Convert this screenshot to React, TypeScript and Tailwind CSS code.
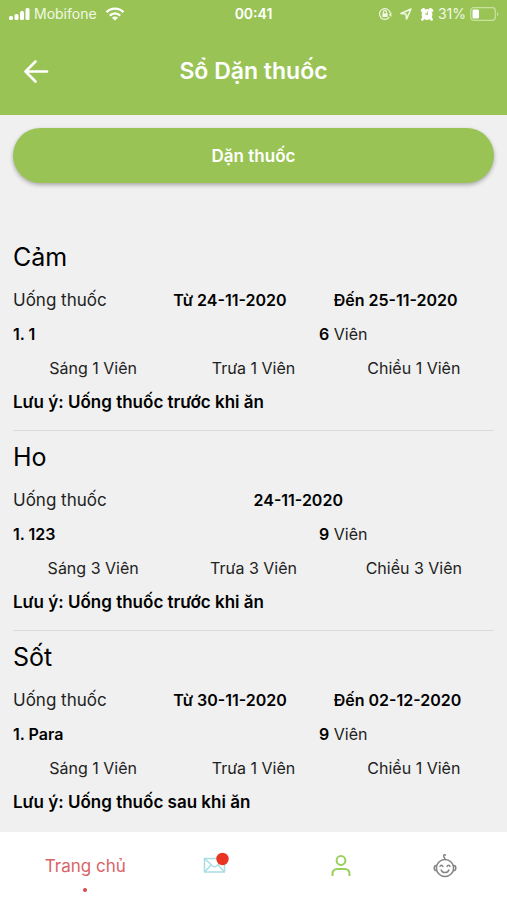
const donThuoc = [
  {
    ten: 'Cảm',
    ngay: ['Từ 24-11-2020', 'Đến 25-11-2020'],
    thuoc: '1. 1',
    tong: 6,
    lieu: ['Sáng 1 Viên', 'Trưa 1 Viên', 'Chiều 1 Viên'],
    luuY: 'Uống thuốc trước khi ăn',
  },
  {
    ten: 'Ho',
    ngay: ['24-11-2020'],
    thuoc: '1. 123',
    tong: 9,
    lieu: ['Sáng 3 Viên', 'Trưa 3 Viên', 'Chiều 3 Viên'],
    luuY: 'Uống thuốc trước khi ăn',
  },
  {
    ten: 'Sốt',
    ngay: ['Từ 30-11-2020', 'Đến 02-12-2020'],
    thuoc: '1. Para',
    tong: 9,
    lieu: ['Sáng 1 Viên', 'Trưa 1 Viên', 'Chiều 1 Viên'],
    luuY: 'Uống thuốc sau khi ăn',
  },
]

function StatusBar() {
  return (
    <div className="grid grid-cols-3 items-center h-7 px-2 text-sm text-[#f1f8e4]">
      <div className="flex items-center gap-1">
        <svg width="22" height="14" viewBox="0 0 22 14" fill="white" aria-hidden="true">
          <rect x="1" y="9" width="4" height="4" rx="1.5" />
          <rect x="6.5" y="7" width="4" height="6" rx="1.5" />
          <rect x="12" y="4" width="4" height="9" rx="1.5" />
          <rect x="17.5" y="1" width="4" height="12" rx="1.5" />
        </svg>
        <span>Mobifone</span>
        <svg className="ml-1" width="20" height="14" viewBox="0 0 20 14" fill="none" stroke="white" strokeWidth="2.4" aria-hidden="true">
          <path d="M1.5 5.2a12 12 0 0 1 17 0" />
          <path d="M4.800 8.600a7.300 7.300 0 0 1 10.400 0" />
          <path d="M10 13.600 7 10.800a4.200 4.200 0 0 1 6 0z" fill="white" stroke="none" />
        </svg>
      </div>
      <span className="text-center font-semibold text-white">00:41</span>
      <div className="flex items-center justify-end gap-1">
        <svg width="14" height="14" viewBox="0 0 14 14" fill="none" stroke="currentColor" strokeWidth="1.2" aria-hidden="true">
          <path d="M11.3 10.200a5.400 5.400 0 1 1 .9-4.200M12.800 5.400v3.200l-1.600-1.400" />
          <rect x="4.300" y="6.200" width="5.400" height="3.800" rx=".5" fill="currentColor" stroke="none" />
          <path d="M5.400 6.400V5.200a1.600 1.600 0 0 1 3.200 0v1.200" />
        </svg>
        <svg className="mx-1" width="12" height="12" viewBox="0 0 12 12" fill="none" stroke="currentColor" strokeWidth="1.5" strokeLinejoin="round" aria-hidden="true">
          <path d="M11 1 .9 5.500l5.100.6.500 5z" />
        </svg>
        <svg width="14" height="14" viewBox="0 0 14 14" aria-hidden="true">
          <circle cx="7" cy="7.500" r="5.400" fill="white" />
          <path d="M2 3.600 3.600 2.200M12 3.600 10.400 2.200M3.400 11.200l-1 1.200M10.600 11.200l1 1.200" stroke="white" strokeWidth="2.600" strokeLinecap="round" />
          <path d="M7.300 4.600v3.200L5.200 6.600" fill="none" stroke="#99c455" strokeWidth="1" />
        </svg>
        <span>31%</span>
        <svg width="29" height="14" viewBox="0 0 29 14" aria-hidden="true">
          <rect x=".7" y=".7" width="24.600" height="12.600" rx="3" fill="none" stroke="#c9e2a0" strokeWidth="1.200" />
          <rect x="2.500" y="2.500" width="6.500" height="9" rx="1.200" fill="white" />
          <path d="M27 4.800c1.800.8 1.800 3.600 0 4.400z" fill="#c9e2a0" />
        </svg>
      </div>
    </div>
  )
}

function DonThuoc({ don }: { don: any }) {
  const motNgay = don.ngay.length === 1
  return (
    <section className="border-b border-[#dcdcdc] pb-[11px] last:border-b-0">
      <h2 className="text-[25px] leading-[52px]">{don.ten}</h2>
      <div className={motNgay ? 'grid grid-cols-2' : 'grid grid-cols-3'}>
        <span className="text-[17px] text-[#222]">Uống thuốc</span>
        {don.ngay.map((n: string) => <span key={n} className="font-semibold whitespace-nowrap">{n}</span>)}
      </div>
      <div className="grid grid-cols-11">
        <span className="col-span-7 font-semibold">{don.thuoc}</span>
        <span className="col-span-4 text-[#222]"><b className="font-semibold text-black">{don.tong}</b> Viên</span>
      </div>
      <div className="grid grid-cols-3 text-center text-[#222]">
        {don.lieu.map((l: string) => <span key={l}>{l}</span>)}
      </div>
      <p className="text-[17px] font-semibold">Lưu ý: {don.luuY}</p>
    </section>
  )
}

function BottomNav() {
  return (
    <nav className="grid grid-cols-[170fr_88fr_164fr_43fr] h-[68px] pr-10 bg-white">
      <a href="#home" className="flex flex-col items-center pt-6 text-[17px] leading-5 text-[#d96468]">
        Trang chủ
        <span className="mt-3 size-1 rounded-full bg-[#d2494f]" />
      </a>
      <a href="#mail" aria-label="Tin nhắn" className="flex justify-center pt-5">
        <svg width="28" height="24" viewBox="0 0 28 24" fill="none" aria-hidden="true">
          <g stroke="#a9dde3" strokeWidth="1.5" strokeLinejoin="round">
            <rect x="3.500" y="6.500" width="20" height="13.500" />
            <path d="m3.500 6.500 8 7.500q2 1.600 4 0l8-7.500M3.500 20l6.700-7.200M23.500 20l-6.700-7.200" />
          </g>
          <circle cx="21.500" cy="7" r="6.200" fill="#e93323" />
        </svg>
      </a>
      <a href="#profile" aria-label="Tài khoản" className="flex justify-center pt-5">
        <svg width="22" height="26" viewBox="0 0 22 26" fill="none" stroke="#98d05b" strokeWidth="2" aria-hidden="true">
          <circle cx="11" cy="8.500" r="4.400" />
          <path d="M2.500 24v-2.500a4.500 4.500 0 0 1 4.500-4.500h8a4.500 4.500 0 0 1 4.500 4.500V24" />
        </svg>
      </a>
      <a href="#baby" aria-label="Bé" className="flex justify-center pt-5">
        <svg width="26" height="28" viewBox="0 0 26 28" fill="none" stroke="#858585" strokeWidth="1.500" strokeLinecap="round" aria-hidden="true">
          <circle cx="13" cy="16" r="8.600" />
          <path d="M13 7.200c-.2-1.700-1.600-2-1.400-3.400.2-1.100 1.400-1.300 1.800-.6" />
          <path d="M4.200 13.400C2.900 13.400 2.200 14.600 2.200 16s.7 2.600 2 2.600M21.800 13.400c1.300 0 2 1.200 2 2.600s-.7 2.600-2 2.600" />
          <path d="M8 14.400c.4-1.500 2.400-1.500 2.900 0M15.100 14.400c.4-1.500 2.400-1.500 2.900 0M9.200 18c.8 3.400 6.800 3.400 7.600 0" />
        </svg>
      </a>
    </nav>
  )
}

export default function App() {
  return (
    <div className="flex flex-col min-h-screen bg-[#f0f0f0] text-black font-['Inter','Noto_Sans',sans-serif]">
      <header className="bg-[#99c455] text-white">
        <StatusBar />
        <div className="grid grid-cols-[48px_1fr_48px] items-center h-[87px] px-3">
          <button aria-label="Quay lại" className="flex items-center justify-center size-12">
            <svg width="26" height="26" viewBox="0 0 26 26" fill="none" stroke="currentColor" strokeWidth="2.600" strokeLinecap="round" strokeLinejoin="round" aria-hidden="true">
              <path d="M24 12.500H2.500M12.500 2.500l-10 10 10 10" />
            </svg>
          </button>
          <h1 className="text-center text-[23px] font-semibold">Sổ Dặn thuốc</h1>
        </div>
      </header>

      <main className="flex-1 px-[13px] pt-[13px] text-base leading-[34px]">
        <button className="block w-full h-[55px] mb-12 rounded-full bg-[#99c455] text-white text-[17px] font-semibold shadow-[0_2px_4px_rgba(0,0,0,0.3)]">Dặn thuốc</button>
        {donThuoc.map((don) => <DonThuoc key={don.ten} don={don} />)}
      </main>

      <BottomNav />
    </div>
  )
}
